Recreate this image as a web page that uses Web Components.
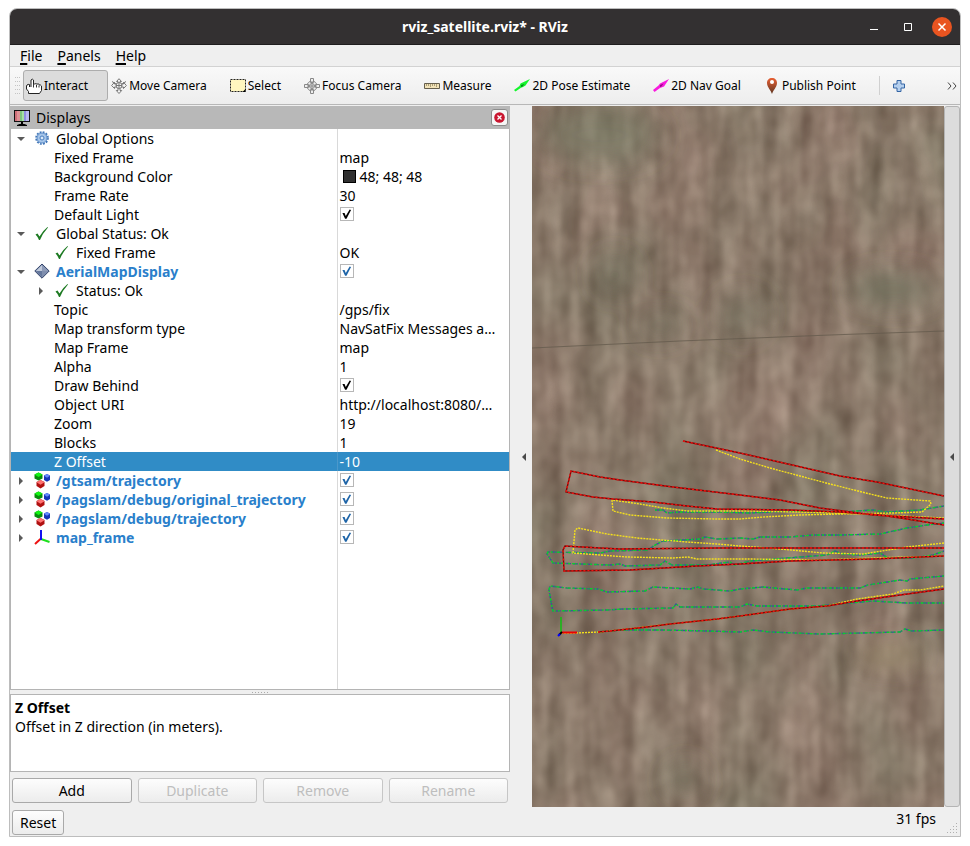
<!DOCTYPE html>
<html lang="en">
<head>
<meta charset="utf-8">
<title>rviz_satellite.rviz* - RViz</title>
<style>
  html { height: 100%; }
  body {
    margin: 0; min-height: 100%; display: flex; box-sizing: border-box;
    padding: 8px 9px 9px; background: #fff;
    font: 14px/19px "Noto Sans", "Open Sans", sans-serif; color: #000;
  }
</style>
</head>
<body>
<rv-window>
  <rv-titlebar slot="title">rviz_satellite.rviz* - RViz</rv-titlebar>
  <rv-menubar slot="menu"></rv-menubar>
  <rv-toolbar slot="tools">
    <rv-tool icon="hand" active>Interact</rv-tool>
    <rv-tool icon="move">Move Camera</rv-tool>
    <rv-tool icon="select">Select</rv-tool>
    <rv-tool icon="focus">Focus Camera</rv-tool>
    <rv-tool icon="ruler">Measure</rv-tool>
    <rv-tool icon="pose">2D Pose Estimate</rv-tool>
    <rv-tool icon="goal">2D Nav Goal</rv-tool>
    <rv-tool icon="pin">Publish Point</rv-tool>
  </rv-toolbar>
  <rv-displays slot="left"></rv-displays>
  <rv-handle slot="left-handle"></rv-handle>
  <rv-map slot="view"></rv-map>
  <rv-handle slot="right-handle" raised></rv-handle>
  <rv-status slot="status">31 fps</rv-status>
</rv-window>

<script>
const ICONS = {
  hand: '<path d="M3.500 9V6.500q-1.500-.5-2.500.5L.5 8v3l2 2.500v2h11l2-3V8q-1-1.500-2.300-1V6.500q-1-1.200-2.200-.3-1-1-2.500-.2L7.500 6V2Q6.500.3 5 2v7" fill="#fff" stroke="#222"/><path d="M7.500 6v3.500M10.500 7v2.500M13 7.500v2" stroke="#333" fill="none"/>',
  move: '<g fill="#f4f4f4" stroke="#777"><path d="M8 .7l2.500 2.800H9V6h3.500V4.300L15.400 7.500l-2.900 3V9H9v3.500h1.700L8 15.500l-2.700-3H7V9H3.500v1.500L.6 7.500l2.900-3.200V6H7V3.500H5.500z"/><circle cx="8" cy="7.500" r="3"/><path d="M1 3.500l4 2.500M15 3.500l-4 2.500" fill="none"/></g><path d="M5 7.500h6M8 5v5" stroke="#777"/>',
  select: '<path d="M.5 1.500h15v12H.5z" fill="#fff6bf" stroke="#222" stroke-dasharray="2 1"/><path d="M15.500 11v3h-3z" fill="#000"/>',
  focus: '<g fill="#eee" stroke="#888"><circle cx="8" cy="8" r="5"/><circle cx="8" cy="8" r="2.500"/><path d="M6.500.5h3v4h-3zM6.500 11.500h3v4h-3zM.5 6.500h4v3h-4zM11.500 6.500h4v3h-4z"/><path d="M8 3v10M3 8h10" fill="none"/></g>',
  ruler: '<path d="M.5 5.500h15v5H.5z" fill="#f2e3b8" stroke="#665f4d"/><path d="M2.500 6v2M4.500 6v2M6.500 6v3M8.500 6v2M10.500 6v2M12.500 6v3" stroke="#aa9d76"/>',
  pose: '<path d="M0 12L5.500 8 6.500 5.500 16 1 11.500 7.500l-2.500 1.500-2 .7L1.500 13.500z" fill="#15f52d"/><path d="M7 7l3.500-1-2 2.500-1.500.5z" fill="#078b1b"/>',
  goal: '<path d="M0 12L5.500 7.500 7 5.500 16 1 11 8.500 7 10 1.500 14z" fill="#f81bdd"/><path d="M7 7l3.500-1.500-2 3-1.500.5z" fill="#970c86"/>',
  pin: '<defs><linearGradient id="p" x2="0" y2="1"><stop stop-color="#e96034"/><stop offset="1" stop-color="#5d3420"/></linearGradient></defs><path d="M8 0C5 0 3 2 3 5c0 4 4 7.500 5 11 1-3.500 5-7 5-11 0-3-2-5-5-5z" fill="url(#p)"/><circle cx="8" cy="4" r="2" fill="#fff"/>',
  plus: '<path d="M6 2.500h4V6h3.500v4H10v3.500H6V10H2.500V6H6z" fill="#b4cfee" stroke="#3465a4"/>',
  monitor: '<path d="M0 0h16v12H0z" fill="#111"/><path d="M1 1h5v10H1z" fill="#cf6f78"/><path d="M3 1h3v10H3z" fill="#dd9296"/><path d="M6 1h4v10H6z" fill="#7fc47f"/><path d="M8 1h2v10H8z" fill="#a4e0a4"/><path d="M10 1h5v10h-5z" fill="#8f8ce2"/><path d="M12 1h3v10h-3z" fill="#b9b8f2"/><path d="M7 12h2v2H7z"/><path d="M3 15q5-2.500 10 0v1H3z"/>',
  gear: '<circle cx="8" cy="7" r="6" fill="none" stroke="#3d73b5" stroke-width="1.600" stroke-dasharray="1.900 1.240"/><circle cx="8" cy="7" r="5" fill="#a6c5e9" stroke="#5a8bc8"/><circle cx="8" cy="7" r="2" fill="#dbe9f8" stroke="#4a7fc0"/>',
  check: '<path d="M1.500 8.500L3.500 7.500 5.500 10.500Q9 4.500 13.500 1L14 1.500Q8.500 7.500 6 14H5Q4 11 1.500 8.500z" fill="#1d7a22"/>',
  diamond: '<path d="M8 0L15.200 7 8 14.200.8 7z" fill="#7f8eae" stroke="#35466c"/><path d="M8 1L14 7H8z" fill="#8e9bb8"/><path d="M8 1v6H2z" fill="#c0c9da"/><path d="M2 7h6v6z" fill="#64779c"/>',
  markers: '<path d="M4.500-.5L8.500 1.500v4L4.500 7.500.5 5.500v-4z" fill="#078d0c"/><path d="M4.500-.5l4 2-4 2.500-4-2.500z" fill="#13f513"/><path d="M13 1l3 1.500V7l-3 1.800L10 7V2.500z" fill="#1536b8"/><path d="M13 1l3 1.800-3 2-3-2z" fill="#658aff"/><path d="M6.500 7l4 2v4l-4 2.500-4-2.500V9z" fill="#b01010"/><path d="M6.500 7l4 2.200-4 2.500-4-2.500z" fill="#ff7373"/>',
  axes: '<path d="M7 8.500L1 14" stroke="#e11" stroke-width="2"/><path d="M7 9l8.500 3" stroke="#1de01d" stroke-width="2"/><path d="M7 0v10" stroke="#11e" stroke-width="2"/>',
};

const define = (name, markup) => customElements.define(name, class extends HTMLElement {
  connectedCallback() {
    if (this.shadowRoot) return;
    const root = this.attachShadow({ mode: 'open' });
    root.innerHTML = typeof markup === 'function' ? markup(this) : markup;
  }
});

define('rv-icon', el => `<style>
  :host { display: block; width: 16px; height: 16px; flex: none; }
  svg { display: block; width: 100%; height: 100%; overflow: visible; }
</style><svg viewBox="0 0 16 16" aria-hidden="true">${ICONS[el.getAttribute('name')] || ''}</svg>`);

define('rv-window', `<style>
  :host { flex: 1; display: flex; flex-direction: column; min-width: 0; box-sizing: border-box;
    background: #efefef; border: 1px solid #bdbdbd; border-radius: 8px 8px 0 0; overflow: hidden; }
  main { flex: 1; display: grid; grid-template-columns: minmax(0, 500fr) 22px minmax(0, 412fr) 16px;
    grid-template-rows: 1fr auto; padding-top: 1px; }
  .left { grid-row: 1 / 3; display: grid; }
  .view, .lh, .rh { display: grid; }
  .lh { grid-row: 1 / 2; }
  .status { grid-column: 2 / 5; }
</style>
<slot name="title"></slot><slot name="menu"></slot><slot name="tools"></slot>
<main>
  <div class="left"><slot name="left"></slot></div>
  <div class="lh"><slot name="left-handle"></slot></div>
  <div class="view"><slot name="view"></slot></div>
  <div class="rh"><slot name="right-handle"></slot></div>
  <div class="status"><slot name="status"></slot></div>
</main>`);

define('rv-titlebar', `<style>
  :host { display: grid; grid-template-columns: 1fr auto 1fr; align-items: center; height: 35px;
    background: #333031; border-bottom: 1px solid #1f1d1e; color: #fff; font-weight: 700; }
  h1 { grid-column: 2; margin: 0; font: inherit; }
  div { display: flex; justify-content: flex-end; gap: 14px; padding-right: 8px; }
  button { width: 20px; height: 20px; padding: 0; border: 0; border-radius: 10px; background: none; }
  .x { background: #e95420; }
  svg { display: block; width: 20px; height: 20px; fill: none; stroke: #fff; }
</style>
<h1><slot></slot></h1>
<div>
  <button aria-label="Minimize"><svg viewBox="0 0 20 20"><path d="M6 12.500h8"/></svg></button>
  <button aria-label="Maximize"><svg viewBox="0 0 20 20"><path d="M6.500 6.500h7v7h-7z"/></svg></button>
  <button class="x" aria-label="Close"><svg viewBox="0 0 20 20"><path d="M6.500 6.500l7 7M13.500 6.500l-7 7" stroke-width="1.500"/></svg></button>
</div>`);

define('rv-menubar', `<style>
  :host { display: flex; gap: 15px; height: 21px; padding-left: 10px; border-bottom: 1px solid #d2d2d2; }
  button { padding: 0; border: 0; background: none; font: inherit; line-height: 21px; color: #000; }
  u { text-decoration-thickness: 2px; text-underline-offset: 2px; }
</style>
<button><u>F</u>ile</button><button><u>P</u>anels</button><button><u>H</u>elp</button>`);

define('rv-toolbar', `<style>
  :host { display: flex; align-items: center; height: 37px; padding: 0 3px 0 5px; font-size: 12px;
    background: linear-gradient(#f9f9f9, #ededed); border-bottom: 1px solid #b7b7b7; }
  .grip { flex: none; width: 5px; height: 17px; margin-right: 3px; fill: #c4c4c4; }
  .sep { flex: none; width: 1px; height: 19px; margin-left: auto; background: #d0d0d0; }
  button { flex: none; padding: 0; border: 0; background: none; }
  .add { margin: 0 40px 0 11px; }
  svg { display: block; }
</style>
<svg class="grip" viewBox="0 0 5 17" aria-hidden="true"><path d="M0 0h1v1H0zM2 0h1v1H2zM4 0h1v1H4zM0 4h1v1H0zM2 4h1v1H2zM4 4h1v1H4zM0 8h1v1H0zM2 8h1v1H2zM4 8h1v1H4zM0 12h1v1H0zM2 12h1v1H2zM4 12h1v1H4zM0 16h1v1H0zM2 16h1v1H2zM4 16h1v1H4z"/></svg><slot></slot><span class="sep"></span>
<button class="add" aria-label="Add tool"><rv-icon name="plus"></rv-icon></button>
<button aria-label="More tools"><svg width="10" height="8" viewBox="0 0 10 8" fill="none" stroke="#444"><path d="M1 .5L4 4 1 7.500M6 .5L9 4 6 7.500"/></svg></button>`);

define('rv-tool', el => `<style>
  :host { display: block; }
  button { display: flex; align-items: center; gap: 2px; height: 31px; padding: 0 19px 0 2px;
    border: 1px solid transparent; border-radius: 3px; background: none; font: inherit; color: #000; white-space: nowrap; }
  :host([active]) button { background: #dcdcdc; border-color: #adadad; }
</style><button><rv-icon name="${el.getAttribute('icon')}"></rv-icon><slot></slot></button>`);

define('rv-handle', `<style>
  :host { display: grid; }
  button { display: grid; align-items: center; justify-content: center; padding: 0; border: 0; background: none; }
  :host(:not([raised])) button { padding-left: 6px; }
  :host([raised]) button { background: #dcdcdc; border: 1px solid #b4b4b4; border-radius: 3px; }
</style><button aria-label="Toggle panel"><svg width="4" height="8" viewBox="0 0 4 8"><path d="M4 0v8L0 4z" fill="#4a4a4a"/></svg></button>`);

define('rv-status', `<style>
  :host { display: block; position: relative; height: 29px; box-sizing: border-box; padding: 2px 24px 0 0; text-align: right; }
  svg { position: absolute; right: 2px; bottom: 2px; fill: #b0b0b0; }
</style><slot></slot>
<svg width="11" height="11" viewBox="0 0 11 11"><path d="M9 0h1v1H9zM9 3h1v1H9zM9 6h1v1H9zM9 9h1v1H9zM6 3h1v1H6zM6 6h1v1H6zM6 9h1v1H6zM3 6h1v1H3zM3 9h1v1H3zM0 9h1v1H0z"/></svg>`);

define('rv-button', el => `<style>
  :host { display: grid; }
  button { height: 25px; padding: 0 7px; border: 1px solid #a9a9a9; border-radius: 3px;
    background: linear-gradient(#fdfdfd, #ececec); font: inherit; color: #000; line-height: 19px; }
  button:disabled { border-color: #c6c6c6; color: #bebebe; }
</style><button ${el.hasAttribute('disabled') ? 'disabled' : ''}><slot></slot></button>`);

/* depth, arrow, icon, label, value, options */
const ROWS = [
  [0, 'open', 'gear', 'Global Options', ''],
  [1, '', '', 'Fixed Frame', 'map'],
  [1, '', '', 'Background Color', '48; 48; 48', 'swatch'],
  [1, '', '', 'Frame Rate', '30'],
  [1, '', '', 'Default Light', true],
  [0, 'open', 'check', 'Global Status: Ok', ''],
  [1, '', 'check', 'Fixed Frame', 'OK'],
  [0, 'open', 'diamond', 'AerialMapDisplay', true, 'display'],
  [1, 'closed', 'check', 'Status: Ok', ''],
  [1, '', '', 'Topic', '/gps/fix'],
  [1, '', '', 'Map transform type', 'NavSatFix Messages a…'],
  [1, '', '', 'Map Frame', 'map'],
  [1, '', '', 'Alpha', '1'],
  [1, '', '', 'Draw Behind', true],
  [1, '', '', 'Object URI', 'http://localhost:8080/…'],
  [1, '', '', 'Zoom', '19'],
  [1, '', '', 'Blocks', '1'],
  [1, '', '', 'Z Offset', '-10', 'selected'],
  [0, 'closed', 'markers', '/gtsam/trajectory', true, 'display'],
  [0, 'closed', 'markers', '/pagslam/debug/original_trajectory', true, 'display'],
  [0, 'closed', 'markers', '/pagslam/debug/trajectory', true, 'display'],
  [0, 'closed', 'axes', 'map_frame', true, 'display'],
];

define('rv-tree', () => `<style>
  :host { display: grid; background: #fff; border: 1px solid #b4b4b4; border-top: 0; }
  table { width: 100%; height: 100%; table-layout: fixed; border-collapse: collapse; }
  col.name { width: 326px; }
  tr { height: 19px; }
  tr.rest { height: auto; }
  td { padding: 0; white-space: nowrap; overflow: hidden; line-height: 19px; }
  td + td { padding-left: 2px; border-left: 1px solid #d9d9d9; }
  .cell { display: flex; align-items: center; height: 19px; }
  .d1 { padding-left: 20px; }
  .arrow { width: 23px; display: grid; padding-left: 6px; box-sizing: border-box; flex: none; }
  rv-icon { margin-right: 6px; }
  .display label { color: #2a7fcb; font-weight: 700; }
  .selected td { background: #308cc6; border-color: #4b98cb; color: #fff; }
  .chip { width: 11px; height: 11px; margin: 0 4px 0 3px; border: 1px solid #000; background: #303030; }
  input { appearance: none; box-sizing: border-box; width: 14px; height: 14px; margin: 0 0 1px; border: 1px solid #b7b7b7; background: #fff; }
  input:checked::before { content: ""; display: block; width: 12px; height: 12px; background: #000;
    clip-path: polygon(16% 42%, 34% 42%, 44% 66%, 76% 12%, 88% 16%, 50% 90%, 38% 90%); }
  .display input:checked::before { background: #1f65a8; }
</style>
<table><colgroup><col class="name"><col></colgroup><tbody>
${ROWS.map(([depth, arrow, icon, label, value, kind = ''], i) => `<tr class="${kind}">
  <td><div class="cell d${depth}"><span class="arrow">${arrow ? `<svg width="8" height="8" viewBox="0 0 8 8"><path d="${arrow === 'open' ? 'M0 2h8L4 6z' : 'M2 0v8l4-4z'}" fill="#5a5a5a"/></svg>` : ''}</span>${icon ? `<rv-icon name="${icon}"></rv-icon>` : ''}<label for="v${i}">${label}</label></div></td>
  <td><div class="cell">${value === true ? `<input type="checkbox" id="v${i}" checked>` : `${kind === 'swatch' ? '<span class="chip"></span>' : ''}<output id="v${i}">${value}</output>`}</div></td></tr>`).join('')}
<tr class="rest"><td></td><td></td></tr></tbody></table>`);

define('rv-displays', `<style>
  :host { display: grid; grid-template-rows: 23px minmax(0, 1fr) 4px 78px auto auto; }
  header { display: flex; align-items: center; gap: 6px; padding: 0 2px 0 4px; background: #b8b8b8; }
  h2 { margin: 0; flex: 1; font: inherit; }
  .close { width: 17px; height: 17px; padding: 0; border: 1px solid #8c8c8c; border-radius: 3px; background: #f6f6f6; display: grid; place-items: center; }
  .split { justify-self: center; align-self: center; width: 17px; height: 1px; background: repeating-linear-gradient(90deg, #aaa 0 1px, transparent 1px 3px); }
  .help { box-sizing: border-box; padding: 3px 4px; background: #fff; border: 1px solid #b4b4b4; }
  .help p, .help h3 { margin: 0; font-size: 14px; line-height: 19px; }
  .buttons { display: grid; grid-template-columns: repeat(4, 1fr); gap: 6px; padding: 6px 2px; }
  .foot { display: flex; padding: 1px 2px; }
</style>
<header><rv-icon name="monitor"></rv-icon><h2>Displays</h2>
<button class="close" aria-label="Close panel"><svg width="11" height="11" viewBox="0 0 11 11"><circle cx="5.500" cy="5.500" r="5.300" fill="#c9152f"/><path d="M3.500 3.500l4 4M7.500 3.500l-4 4" stroke="#fff" stroke-width="1.300"/></svg></button></header>
<rv-tree></rv-tree>
<span class="split"></span>
<section class="help"><h3>Z Offset</h3><p>Offset in Z direction (in meters).</p></section>
<div class="buttons"><rv-button>Add</rv-button><rv-button disabled>Duplicate</rv-button><rv-button disabled>Remove</rv-button><rv-button disabled>Rename</rv-button></div>
<div class="foot"><rv-button>Reset</rv-button></div>`);

const RED = [
  '683,441 740,453 840,476 877,482 944,496',
  '944,519 873,515 843,511 820,508 780,500 740,495 673,487 620,480 600,477 571,471 566,492 593,497 613,499 653,502 687,506 717,509 790,510 840,512 880,515 907,519 944,525',
  '944,548 740,548 717,548 620,549 600,548 565,546 563,550 564,571 630,570 697,566 740,564 790,561 873,559 944,556',
  '598,632 610,631 647,627 670,624 717,619 740,616 790,609 827,606 857,601 900,595 944,589',
];
const YELLOW = [
  '716,450 740,459 770,468 800,476 830,484 870,494 887,498 930,501 931,504 922,512 893,513 840,514 800,515 763,517 740,519 717,519 667,518 630,515 613,511 612,500 640,504 663,508 687,511 750,511 840,513 944,518',
  '944,543 907,547 863,554 823,553 780,549 740,546 717,544 687,542 637,538 607,534 578,528 575,530 573,553 600,555 627,557 673,558 688,557 697,559 750,559 820,560 873,558 944,556',
  '561,633 575,633 600,632 627,629 670,624 717,619 740,616 790,609 827,606 857,599 893,594 904,590 920,590 944,586',
];
const GREEN = [
  '655,510 663,510 667,513 680,512 717,512 750,513 790,511 840,512 873,510 887,512 920,510 944,506',
  '944,523 927,525 907,528 880,534 840,535 813,535 790,537 760,537 753,539 740,538 717,539 705,537 700,539 663,541 655,545 648,550 610,551 600,553 548,552 547,554 553,563 610,565 620,564 625,566 660,565 665,561 672,565 707,565 730,562 735,565 750,561 787,558 827,555 835,551 843,554 860,555 880,553 888,558 913,558 933,555 944,551',
  '944,576 910,579 907,581 900,580 868,585 860,588 807,588 797,590 763,587 740,589 730,591 703,589 698,587 690,589 653,587 645,591 607,592 598,589 567,588 550,586 549,590 552,607 553,611 607,610 623,609 673,608 676,604 680,607 740,607 747,604 757,606 817,606 873,601 907,603 944,603',
  '597,632 623,630 663,630 707,631 740,632 753,630 770,632 820,634 900,632 905,629 912,631 944,630',
];
const lines = (set, attrs) => set.map(p => `<polyline points="${p}" ${attrs}/>`).join('');

define('rv-map', `<style>
  :host { display: block; position: relative; overflow: hidden; background: #877868; }
  svg { position: absolute; inset: 0; width: 100%; height: 100%; display: block; }
</style>
<svg viewBox="532 106 412 701" preserveAspectRatio="xMidYMid slice" role="img" aria-label="Satellite map with trajectories">
<defs>
  <filter id="streaks" x="0" y="0" width="1" height="1" color-interpolation-filters="sRGB">
    <feTurbulence type="fractalNoise" baseFrequency=".055 .009" numOctaves="2" seed="8"/>
    <feColorMatrix values=".42 0 0 0 .333  .42 0 0 0 .267  .4 0 0 0 .216  0 0 0 0 1"/>
  </filter>
  <filter id="grain" x="0" y="0" width="1" height="1" color-interpolation-filters="sRGB">
    <feTurbulence type="fractalNoise" baseFrequency=".05 .04" numOctaves="2" seed="21"/>
    <feColorMatrix values=".5 0 0 0 .293  .5 0 0 0 .227  .48 0 0 0 .176  0 0 0 0 1"/>
  </filter>
  <filter id="tint" x="0" y="0" width="1" height="1" color-interpolation-filters="sRGB">
    <feTurbulence type="fractalNoise" baseFrequency=".014 .009" numOctaves="2" seed="4"/>
    <feColorMatrix values=".5 0 0 0 .293  -.1 0 0 0 .527  .1 0 0 0 .366  0 0 0 0 1"/>
  </filter>
  <filter id="soft" x="-.5" y="-.5" width="2" height="2"><feGaussianBlur stdDeviation="12"/></filter>
</defs>
<rect x="532" y="106" width="412" height="701" filter="url(#streaks)"/>
<rect x="532" y="106" width="412" height="701" filter="url(#grain)" opacity=".36"/>
<rect x="532" y="106" width="412" height="701" filter="url(#tint)" opacity=".12"/>
<g filter="url(#soft)" fill="#6f7560">
  <ellipse cx="600" cy="135" rx="62" ry="28" opacity=".45"/>
  <ellipse cx="893" cy="289" rx="45" ry="16" opacity=".65"/>
  <ellipse cx="615" cy="275" rx="20" ry="20" opacity=".4"/>
  <ellipse cx="742" cy="315" rx="25" ry="22" opacity=".4"/>
  <ellipse cx="660" cy="325" rx="25" ry="14" opacity=".4"/>
  <ellipse cx="685" cy="780" rx="18" ry="16" opacity=".5"/>
  <ellipse cx="890" cy="655" rx="32" ry="10" fill="#a39b72" opacity=".6"/>
</g>
<path d="M532 348L680 341 830 335 944 331" stroke="#63594c" fill="none" opacity=".75"/>
<g fill="none" stroke-width="1.400">
  ${lines(GREEN, 'stroke="#3f4f9c" stroke-dasharray="5 2"')}
  ${lines(GREEN, 'stroke="#0bd02a" stroke-dasharray="2 2 3 1 1 2"')}
  ${lines(YELLOW, 'stroke="#f5e01c" stroke-dasharray="2 1"')}
  ${lines(RED, 'stroke="#7d0806"')}
  ${lines(RED, 'stroke="#f01310" stroke-dasharray="2 2"')}
</g>
<path d="M561 617v15" stroke="#10c010" stroke-width="1.500"/><path d="M562 632.500h15" stroke="#e00" stroke-width="2"/><path d="M562 632l-3 3" stroke="#000" stroke-width="2"/><path d="M560 634l-2 2" stroke="#00f" stroke-width="2"/>
</svg>`);
</script>
</body>
</html>
